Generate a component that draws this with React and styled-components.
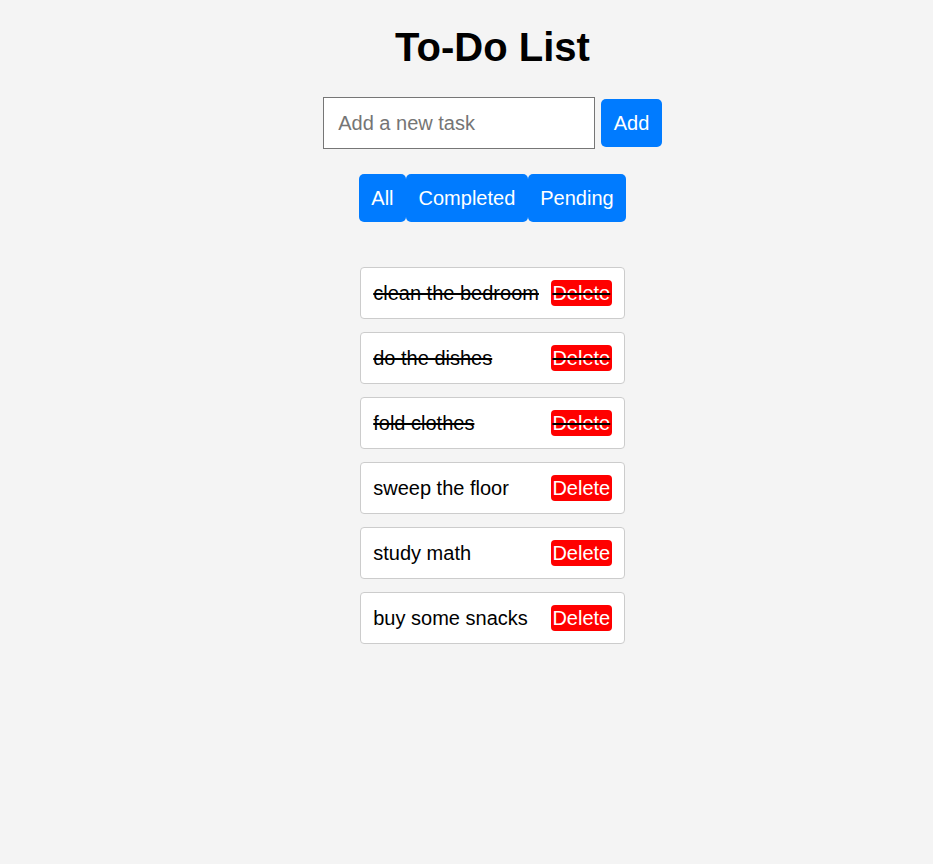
import React, { useState } from 'react';
import styled, { createGlobalStyle } from 'styled-components';

const GlobalStyle = createGlobalStyle`
  html, body {
    margin: 0;
    background: #f4f4f4;
    font-family: "Liberation Sans", Arial, sans-serif;
  }
`;

const Page = styled.div`
  padding: 25px 0 40px 52px;
  display: flex;
  flex-direction: column;
  align-items: center;
`;

const Title = styled.h1`
  margin: 0 0 27px;
  font-size: 40px;
  font-weight: bold;
  color: #000;
`;

const AddRow = styled.div`
  display: flex;
  align-items: center;
  gap: 6px;
`;

const TaskInput = styled.input`
  box-sizing: border-box;
  width: 272px;
  height: 52px;
  padding: 0 14px;
  font-family: inherit;
  font-size: 20px;
  color: #000;
  background: #fff;
  border: 1px solid #767676;
  border-radius: 0;
  outline: none;

  &::placeholder {
    color: #757575;
  }
`;

const BlueButton = styled.button`
  padding: 12px 12.5px;
  font-family: inherit;
  font-size: 20px;
  line-height: 24px;
  color: #fff;
  background: #007bff;
  border: none;
  border-radius: 5px;
  cursor: pointer;
`;

const FilterRow = styled.div`
  display: flex;
  margin-top: 25px;
`;

const List = styled.ul`
  list-style: none;
  margin: 45px 0 0;
  padding: 0;
  display: flex;
  flex-direction: column;
  gap: 13px;
  width: fit-content;
`;

const Item = styled.li`
  display: flex;
  align-items: center;
  justify-content: space-between;
  gap: 12px;
  padding: 12px;
  background: #fff;
  border: 1px solid #ccc;
  border-radius: 4px;
  font-size: 20px;
  line-height: 23px;
  color: #000;
`;

const TaskText = styled.span`
  white-space: nowrap;
  text-decoration: ${(p) => (p.$done ? 'line-through' : 'none')};
`;

const DeleteButton = styled.button`
  padding: 2px 1.5px 1px;
  font-family: inherit;
  font-size: 20px;
  line-height: 23px;
  color: #fff;
  background: #ff0000;
  border: none;
  border-radius: 4px;
  cursor: pointer;
  text-decoration: ${(p) => (p.$done ? 'line-through' : 'none')};
  text-decoration-color: #000;
`;

const initialTasks = [
  { id: 1, text: 'clean the bedroom', done: true },
  { id: 2, text: 'do the dishes', done: true },
  { id: 3, text: 'fold clothes', done: true },
  { id: 4, text: 'sweep the floor', done: false },
  { id: 5, text: 'study math', done: false },
  { id: 6, text: 'buy some snacks', done: false },
];

export default function App() {
  const [tasks, setTasks] = useState(initialTasks);
  const [inputValue, setInputValue] = useState('');
  const [filter, setFilter] = useState('all');

  const handleAdd = () => {
    if (!inputValue.trim()) return;
    setTasks([...tasks, { id: Date.now(), text: inputValue.trim(), done: false }]);
    setInputValue('');
  };

  const visible = tasks.filter((t) =>
    filter === 'all' ? true : filter === 'completed' ? t.done : !t.done
  );

  return (
    <>
      <GlobalStyle />
      <Page>
        <Title>To-Do List</Title>
        <AddRow>
          <TaskInput
            placeholder='Add a new task'
            value={inputValue}
            onChange={(e) => setInputValue(e.target.value)}
          />
          <BlueButton onClick={handleAdd}>Add</BlueButton>
        </AddRow>
        <FilterRow>
          <BlueButton onClick={() => setFilter('all')}>All</BlueButton>
          <BlueButton onClick={() => setFilter('completed')}>Completed</BlueButton>
          <BlueButton onClick={() => setFilter('pending')}>Pending</BlueButton>
        </FilterRow>
        <List>
          {visible.map((task) => (
            <Item key={task.id}>
              <TaskText
                $done={task.done}
                onClick={() => setTasks(tasks.map((t) => (t.id === task.id ? { ...t, done: !t.done } : t)))}
              >
                {task.text}
              </TaskText>
              <DeleteButton
                $done={task.done}
                onClick={() => setTasks(tasks.filter((t) => t.id !== task.id))}
              >
                Delete
              </DeleteButton>
            </Item>
          ))}
        </List>
      </Page>
    </>
  );
}
